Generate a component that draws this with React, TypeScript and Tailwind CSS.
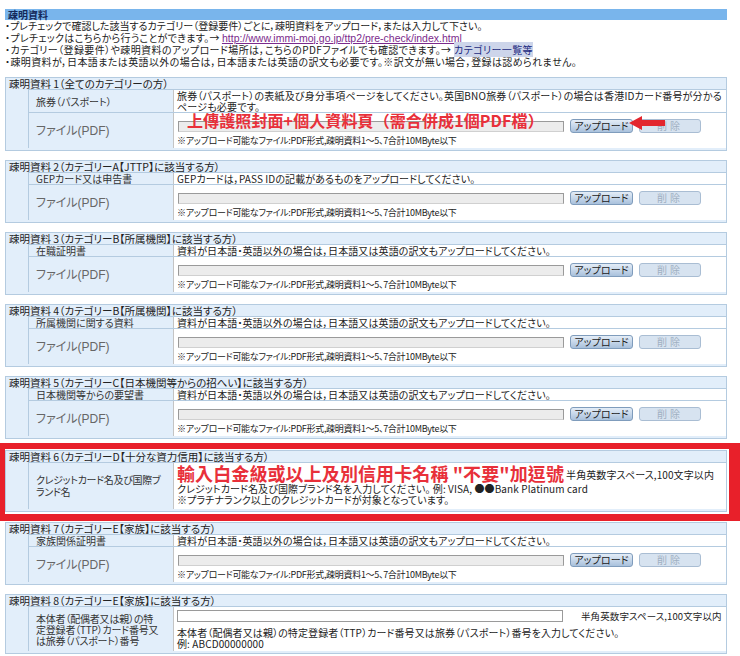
import type { ReactNode } from 'react';

const NOTE = '※アップロード可能なファイル:PDF形式,疎明資料1～5、7合計10MByte以下';
const TRANS = '資料が日本語・英語以外の場合は，日本語又は英語の訳文もアップロードしてください。';

function Section({ title, children }: { title: string; children: ReactNode }) {
  return (
    <div className="border border-[#b4cbe0] bg-[#e2eefa] pb-[2px]">
      <div className="h-[11px] leading-[11px] px-[3px] text-[10.5px] text-[#222]">{title}</div>
      <div className="ml-[22px] border-t border-l border-[#b4cbe0]">{children}</div>
    </div>
  );
}

function Row({ label, children, labelClass = '' }: { label: ReactNode; children: ReactNode; labelClass?: string }) {
  return (
    <div className="grid grid-cols-[144px_1fr] border-b border-[#b4cbe0] last:border-b-0">
      <div className={`flex items-center px-[7px] text-[10px] leading-[11px] text-[#333] ${labelClass}`}>{label}</div>
      <div className="bg-white border-l border-[#c4c4c4] px-[3px] text-[10px] leading-[11px] tracking-[0.1px] text-[#222]">{children}</div>
    </div>
  );
}

function Buttons() {
  return (
    <>
      <button className="w-[63px] h-[14px] rounded-[3px] border border-[#7f9cbc] bg-gradient-to-b from-[#e4edf7] to-[#a9c1dc] text-[10px] leading-[12px] text-[#222]">
        アップロード
      </button>
      <button className="w-[62px] h-[14px] rounded-[3px] border border-[#a9bdd3] bg-[#d7e3f0] text-[10px] leading-[12px] text-[#9fb0c2] tracking-[3px]">
        削除
      </button>
    </>
  );
}

function FileRow({ overlay, arrow }: { overlay?: ReactNode; arrow?: boolean }) {
  return (
    <Row label={<span className="text-[12px] text-[#666]">ファイル<span className="font-['Liberation_Sans',sans-serif] text-[12px]">(PDF)</span></span>}>
      <div className="relative flex items-center gap-[6px] pt-[6px] pl-[1px]">
        <div className="w-[386px] h-[11px] bg-[#ececec] border border-[#9a9a9a] border-b-[#d0d0d0]" />
        <Buttons />
        {overlay}
        {arrow && (
          <svg className="absolute left-[452px] top-[3px]" width="36" height="14" viewBox="0 0 36 14">
            <polygon points="0,7 13,0 13,4 36,4 36,10 13,10 13,14" fill="#e3262e" />
          </svg>
        )}
      </div>
      <div className="h-[15px] pt-[2px] text-[9px] leading-[11px] tracking-[-0.3px]">{NOTE}</div>
    </Row>
  );
}

function FileSection({ n, title, label, desc }: { n: number; title: string; label: string; desc: string }) {
  return (
    <Section title={`疎明資料 ${n}（${title}）`}>
      <Row label={label}>{desc}</Row>
      <FileRow />
    </Section>
  );
}

export default function App() {
  return (
    <div className="w-[740px] h-[656px] overflow-hidden bg-white pt-[9px] px-[5px] font-['Noto_Sans_CJK_JP',sans-serif] [font-feature-settings:'palt'] text-[#222]">
      <div className="w-[722px]">
        <div className="h-[11px] bg-[#79b5ec] px-[3px] text-[10px] leading-[11px] font-bold text-[#14285a]">疎明資料</div>
        <div className="text-[10px] leading-[11.5px] whitespace-nowrap">
          <p>・プレチェックで確認した該当するカテゴリー（登録要件）ごとに，疎明資料をアップロード，または入力して下さい。</p>
          <p>
            <span className="tracking-[0.3px]">・プレチェックはこちらから行うことができます。→</span>{' '}
            <a className="text-[#7b2a8c] underline font-['Liberation_Sans',sans-serif] text-[10.5px]">http://www.immi-moj.go.jp/ttp2/pre-check/index.html</a>
          </p>
          <p className="tracking-[0.4px]">
            ・カテゴリー（登録要件）や疎明資料のアップロード場所は，こちらのPDFファイルでも確認できます。→{' '}
            <span className="bg-[#cdd5ea] text-[#1c2a80]">カテゴリー一覧等</span>
          </p>
          <p className="tracking-[0.4px]">・疎明資料が，日本語または英語以外の場合は，日本語または英語の訳文も必要です。※訳文が無い場合，登録は認められません。</p>
        </div>

        <div className="mt-[10px] flex flex-col gap-[9px]">
          <Section title="疎明資料 1（全てのカテゴリーの方）">
            <Row label="旅券（パスポート）">
              <span className="tracking-[0.2px] whitespace-nowrap">
                旅券（パスポート）の表紙及び身分事項ページをしてください。英国BNO旅券（パスポート）の場合は香港IDカード番号が分かる
                <br />
                ページも必要です。
              </span>
            </Row>
            <FileRow
              arrow
              overlay={
                <span className="absolute left-[10px] top-[-2px] font-['Noto_Sans_CJK_TC',sans-serif] text-[16px] leading-[18px] font-bold text-[#e8303a] [font-feature-settings:normal]">
                  上傳護照封面+個人資料頁（需合併成1個PDF檔）
                </span>
              }
            />
          </Section>

          <FileSection n={2} title="カテゴリーA【JTTP】に該当する方" label="GEPカード又は申告書" desc="GEPカードは，PASS IDの記載があるものをアップロードしてください。" />
          <FileSection n={3} title="カテゴリーB【所属機関】に該当する方" label="在職証明書" desc={TRANS} />
          <FileSection n={4} title="カテゴリーB【所属機関】に該当する方" label="所属機関に関する資料" desc={TRANS} />
          <FileSection n={5} title="カテゴリーC【日本機関等からの招へい】に該当する方" label="日本機関等からの要望書" desc={TRANS} />

          <div className="relative mt-[2px]">
            <Section title="疎明資料 6（カテゴリーD【十分な資力信用】に該当する方）">
              <Row
                label={<span className="whitespace-nowrap">クレジットカード名及び国際ブ<br />ランド名</span>}
                labelClass="text-[10.5px] leading-[12px] tracking-[-0.3px] pr-0"
              >
                <div className="flex items-end gap-[2px] whitespace-nowrap">
                  <span className="font-['Noto_Sans_CJK_TC',sans-serif] text-[18px] leading-[20px] font-bold text-[#e8303a] [font-feature-settings:normal]">
                    輸入白金級或以上及別信用卡名稱 "不要"加逗號
                  </span>
                  <span className="pb-[3px]">半角英数字スペース,100文字以内</span>
                </div>
                <div>クレジットカード名及び国際ブランド名を入力してください。 例: VISA, ●●Bank Platinum card</div>
                <div className="pb-[4px]">※プラチナランク以上のクレジットカードが対象となっています。</div>
              </Row>
            </Section>
            <div className="absolute -left-[5px] -top-[7px] -right-[13px] -bottom-[9px] border-t-[6px] border-l-[5px] border-r-[11px] border-b-[7px] border-[#e8202a] pointer-events-none" />
          </div>

          <div className="mt-[1px]">
            <FileSection n={7} title="カテゴリーE【家族】に該当する方" label="家族関係証明書" desc={TRANS} />
          </div>

          <Section title="疎明資料 8（カテゴリーE【家族】に該当する方）">
            <Row
              label={
                <span className="whitespace-nowrap">
                  本体者（配偶者又は親）の特<br />定登録者（TTP）カード番号又<br />は旅券（パスポート）番号
                </span>
              }
              labelClass="text-[10.5px] leading-[11px] tracking-[-0.2px] pr-0"
            >
              <div className="flex items-center gap-[18px] pt-[3px] whitespace-nowrap">
                <div className="w-[386px] h-[12px] border border-[#9a9a9a] bg-white" />
                <span className="text-[9.5px]">半角英数字スペース,100文字以内</span>
              </div>
              <div className="pt-[5px]">本体者（配偶者又は親）の特定登録者（TTP）カード番号又は旅券（パスポート）番号を入力してください。</div>
              <div className="pb-[2px]">例: ABCD00000000</div>
            </Row>
          </Section>
        </div>
      </div>
    </div>
  );
}
